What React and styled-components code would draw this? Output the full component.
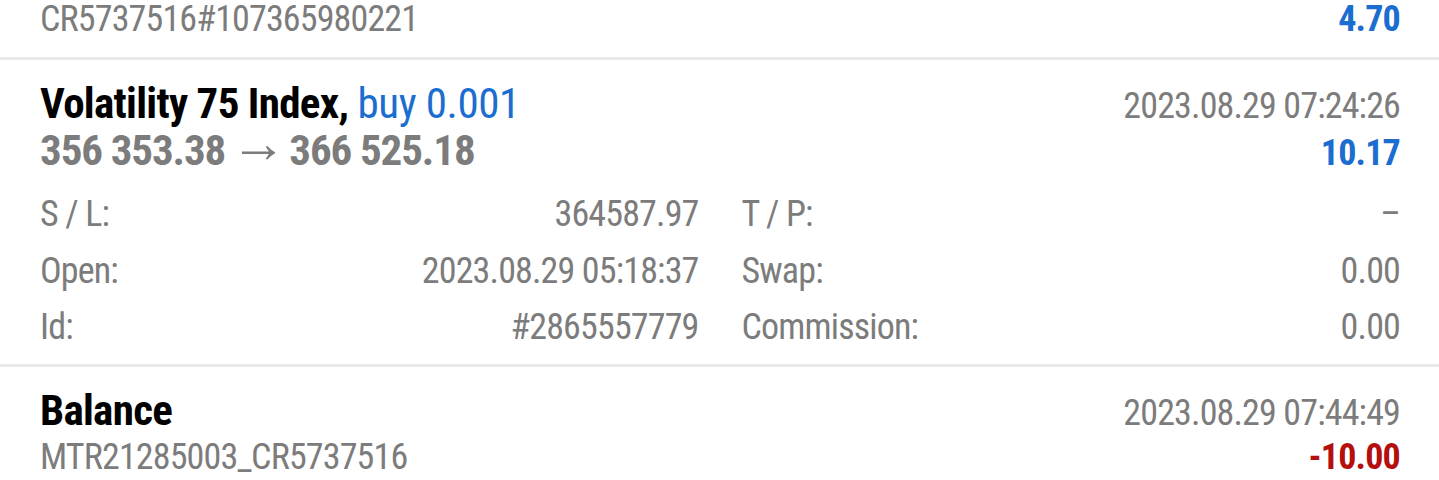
import React from 'react'
import styled, { createGlobalStyle } from 'styled-components'

const GlobalStyle = createGlobalStyle`
  html, body {
    margin: 0;
    padding: 0;
    background: #ffffff;
  }
  body {
    font-family: Roboto, "Noto Sans", sans-serif;
    font-stretch: 75%;
    overflow: hidden;
  }
`;

const List = styled.div`
  width: 1439px;
`;

const Item = styled.div`
  padding: ${p => p.$top}px 39px ${p => p.$bottom}px 40px;
  margin-top: ${p => p.$shift || 0}px;
  border-bottom: ${p => (p.$last ? 'none' : '3px solid #e8e8e8')};
`;

const Line = styled.div`
  display: flex;
  justify-content: space-between;
  align-items: baseline;
  height: 47px;
  line-height: 47px;
  white-space: nowrap;
`;

const Title = styled.span`
  font-size: 43px;
  font-weight: 700;
  letter-spacing: -0.7px;
  color: #000000;
`;

const Side = styled.span`
  font-size: 43px;
  font-weight: 400;
  letter-spacing: -0.4px;
  color: #1b6dcf;
`;

const Prices = styled.span`
  font-size: 43px;
  font-weight: 700;
  letter-spacing: -1.1px;
  color: #7c7c7c;
`;

const Arrow = styled.span`
  font-family: "Liberation Sans", sans-serif;
  font-weight: 400;
  font-size: 56px;
  line-height: 0;
  vertical-align: 3px;
  margin: 0 3px 0 5px;
  letter-spacing: 0;
`;

const Muted = styled.span`
  font-size: 36px;
  font-weight: 400;
  letter-spacing: -0.85px;
  color: #7c7c7c;
`;

const Profit = styled.span`
  font-size: 36px;
  font-weight: 700;
  letter-spacing: -0.8px;
  color: ${p => (p.$negative ? '#b30f0f' : '#1b6dcf')};
`;

const Details = styled.div`
  display: grid;
  grid-template-columns: 1fr 1fr;
  column-gap: 43px;
  margin-top: 12px;
`;

const Field = styled.div`
  display: flex;
  justify-content: space-between;
  height: 56.5px;
  line-height: 56.5px;
  font-size: 36px;
  letter-spacing: -0.85px;
  color: #7c7c7c;
  white-space: nowrap;
`;

const fields = [
  ['S / L:', '364587.97'],
  ['T / P:', '–'],
  ['Open:', '2023.08.29 05:18:37'],
  ['Swap:', '0.00'],
  ['Id:', '#2865557779'],
  ['Commission:', '0.00'],
];

const App = () => (
  <>
    <GlobalStyle />
    <List>
      <Item $top={0} $bottom={14} $shift={-4}>
        <Line>
          <Muted>CR5737516#107365980221</Muted>
          <Profit>4.70</Profit>
        </Line>
      </Item>

      <Item $top={20} $bottom={8}>
        <Line>
          <span>
            <Title>Volatility 75 Index, </Title>
            <Side>buy 0.001</Side>
          </span>
          <Muted>2023.08.29 07:24:26</Muted>
        </Line>
        <Line>
          <Prices>
            356 353.38<Arrow>→</Arrow>366 525.18
          </Prices>
          <Profit>10.17</Profit>
        </Line>
        <Details>
          {fields.map(([label, value]) => (
            <Field key={label}>
              <span>{label}</span>
              <span>{value}</span>
            </Field>
          ))}
        </Details>
      </Item>

      <Item $top={20} $bottom={20} $last>
        <Line>
          <Title>Balance</Title>
          <Muted>2023.08.29 07:44:49</Muted>
        </Line>
        <Line>
          <Muted>MTR21285003_CR5737516</Muted>
          <Profit $negative>-10.00</Profit>
        </Line>
      </Item>
    </List>
  </>
)

export default App;
